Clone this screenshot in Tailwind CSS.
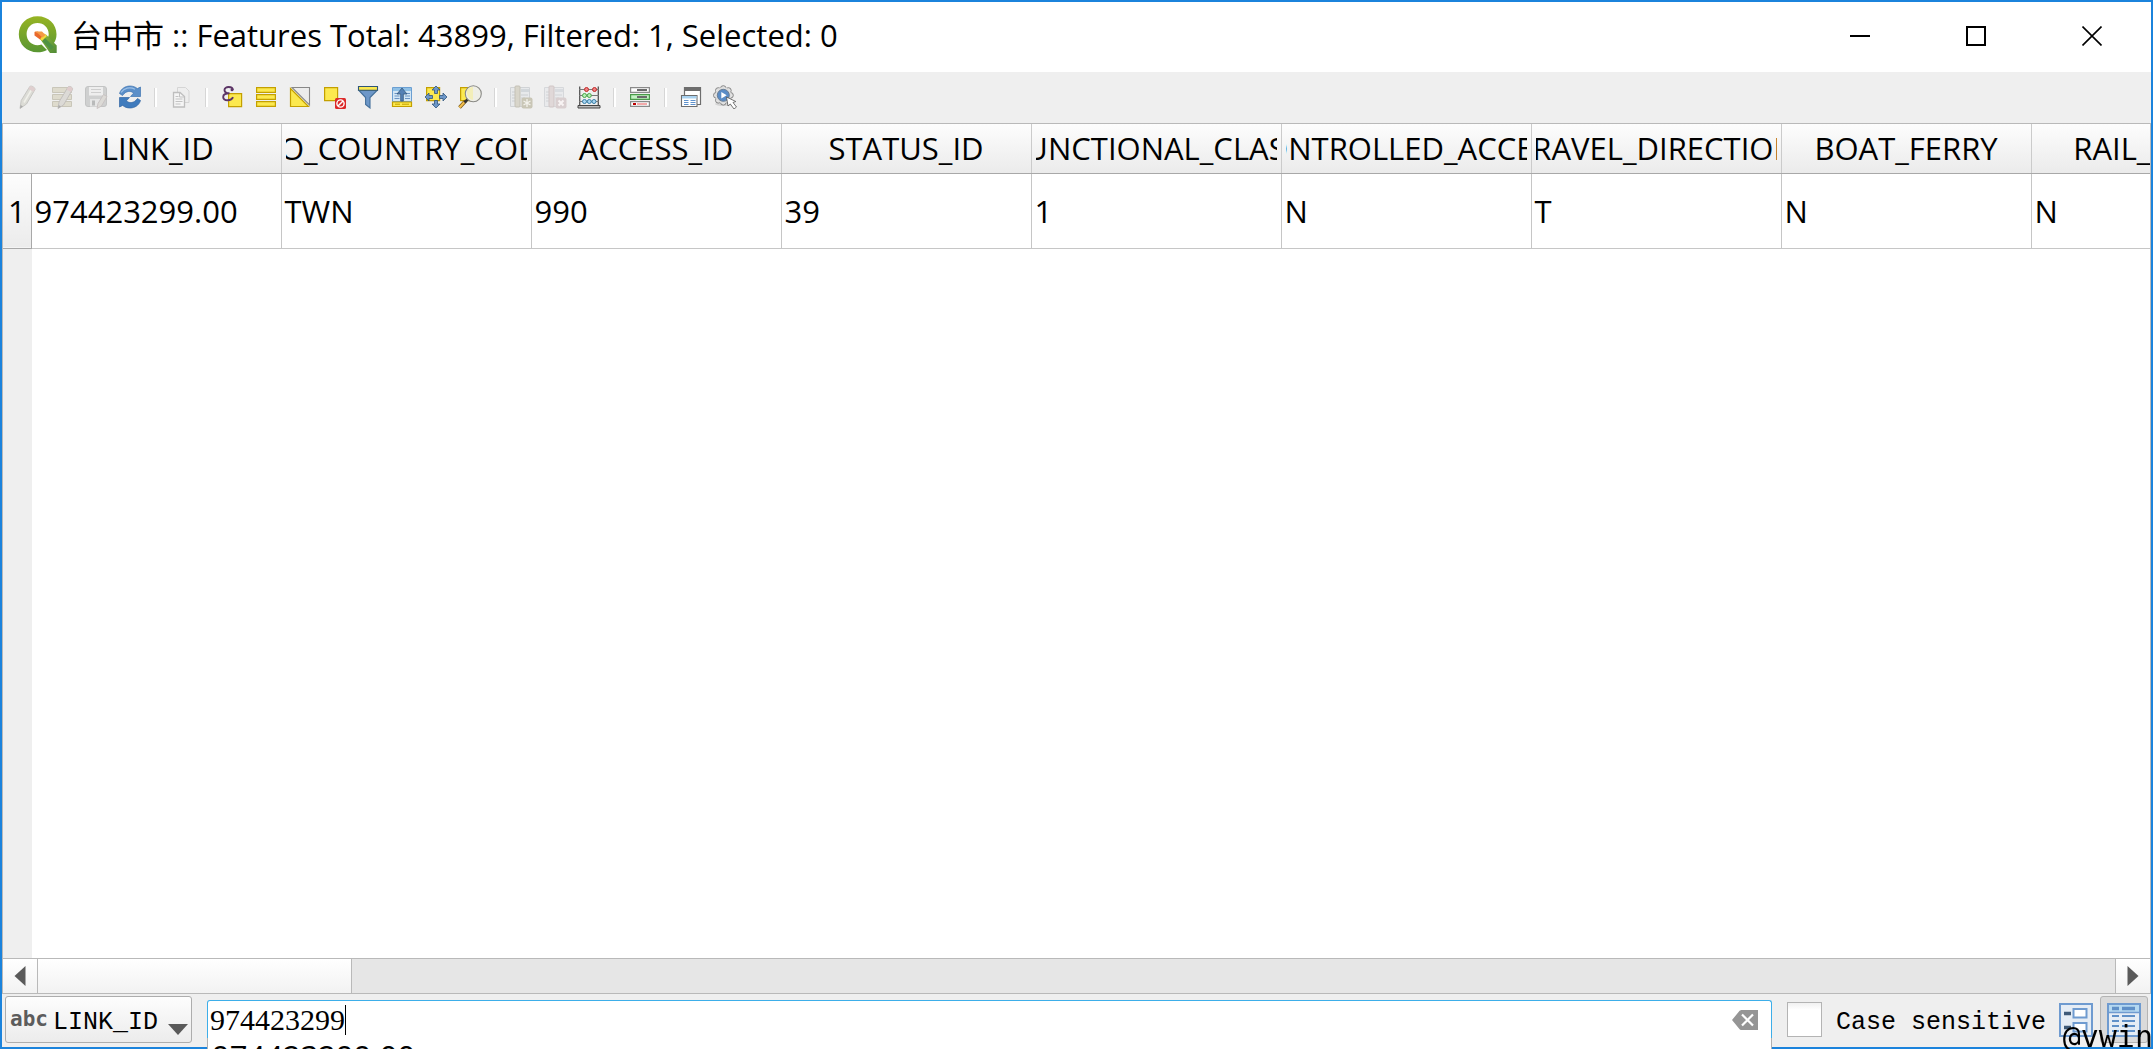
<!DOCTYPE html>
<html lang="en">
<head>
<meta charset="utf-8">
<title>台中市 :: Features Total: 43899, Filtered: 1, Selected: 0</title>
<script src="https://cdn.jsdelivr.net/npm/@tailwindcss/browser@4"></script>
</head>
<body class="overflow-hidden bg-white">
<div class="relative flex h-screen flex-col overflow-hidden border-2 border-[#1b83dc] bg-[#efefef] font-['Open_Sans','Noto_Sans_CJK_TC',sans-serif] text-black">

  <!-- Title bar -->
  <header class="flex h-[70px] shrink-0 items-center bg-white pl-4">
    <svg class="mb-1 size-10 shrink-0" viewBox="0 0 40 40">
      <defs>
        <linearGradient id="ring" x1="0" y1="0" x2="0" y2="1"><stop offset="0" stop-color="#97b423"/><stop offset="1" stop-color="#589632"/></linearGradient>
        <linearGradient id="tail" x1="0" y1="0" x2="1" y2="1"><stop offset="0" stop-color="#8fb83c"/><stop offset="1" stop-color="#4f8a36"/></linearGradient>
      </defs>
      <path d="M19.500 1.200C30.500 1.200 38.500 9 38.500 19.300C38.500 23 37.500 26 35.500 28.800L29.500 23C30.300 21.800 30.700 20.600 30.700 19C30.700 12.800 25.800 8 19.500 8C13.300 8 8.600 12.800 8.600 19C8.600 25.400 13.300 30.200 19.500 30.200C21 30.200 22.300 30 23.500 29.500L29 35C26.300 36.600 23 37.300 19.500 37.300C8.700 37.300 .800 29.500 .800 19.300C.800 9 8.700 1.200 19.500 1.200Z" fill="url(#ring)"/>
      <path d="M22.500 24.500V19.500H28L38.700 30.500V38H32Z" fill="url(#tail)"/>
      <path d="M22.500 24.500L33 35L36 32L25.500 21.500Z" fill="#4f9142"/>
      <path d="M21.500 23.500L26.500 18.500L29 21L24 26Z" fill="#f3d93b"/>
      <path d="M16.500 17V20.500L22 24.500L24 21.500L20 16.500Z" fill="#e9692c"/>
      <path d="M16.500 16.500H24L27.500 20L24.500 22.500L20 18.500Z" fill="#f59a45"/>
    </svg>
    <h1 class="ml-[13px] flex-1 truncate pb-1 text-[31px] leading-10">台中市 :: Features Total: 43899, Filtered: 1, Selected: 0</h1>
    <div class="mr-px flex self-stretch">
      <button type="button" aria-label="Minimize" class="flex w-[116px] items-center justify-center"><svg class="size-5" viewBox="0 0 20 20"><path d="M0 9H20" stroke="#000" stroke-width="2"/></svg></button>
      <button type="button" aria-label="Maximize" class="flex w-[116px] items-center justify-center pb-0.5"><svg class="size-5" viewBox="0 0 20 20"><path d="M1 1H19V19H1Z" fill="none" stroke="#000" stroke-width="2"/></svg></button>
      <button type="button" aria-label="Close" class="flex w-[116px] items-center justify-center pb-0.5"><svg class="size-5" viewBox="0 0 20 20"><path d="M.5 .5L19.500 19.500M19.500 .5L.5 19.500" stroke="#000" stroke-width="1.600"/></svg></button>
    </div>
  </header>

  <!-- Tool bar -->
  <div role="toolbar" class="flex h-[51px] shrink-0 items-center pb-px pl-[9px] [&>button]:flex [&>button]:w-[34px] [&>button]:justify-center [&_svg]:size-6">
    <button type="button" aria-label="Toggle editing" disabled>
      <svg viewBox="0 0 24 24"><path d="M4 23.500L5.200 15.500L13.800 1.500C15.500 .3 19 2.200 19 4.500L10.500 19Z" fill="#dcdcd6" stroke="#c6c6c2"/><path d="M13.800 1.500C15.500 .3 19 2.200 19 4.500L17.500 7L12.300 4Z" fill="#dfcfcf"/><path d="M8 17.500L15 5.500" stroke="#f0f0ea" stroke-width="1.500"/><path d="M4 23.500L4.600 20L7 21.500Z" fill="#aaa"/></svg></button>
    <button type="button" aria-label="Multi edit" disabled>
      <svg viewBox="0 0 24 24"><g fill="#dedbcd" stroke="#c9c6b9"><path d="M2.500 2.500h19v5h-19zM2.500 9.500h19v5h-19zM2.500 16.500h19v5h-19z"/></g><path d="M8 23.500L9 17L18 2C20 .5 23 2.500 22.500 4.500L13.500 20Z" fill="#dcdad6" stroke="#c2bfbc"/><path d="M18 2C20 .5 23 2.500 22.500 4.500L21 7L16.500 4.500Z" fill="#dfcccc"/><path d="M8 23.500L8.700 20L11 21.500Z" fill="#aaa"/></svg></button>
    <button type="button" aria-label="Save edits" disabled>
      <svg viewBox="0 0 24 24"><rect x="1.500" y="1.500" width="21" height="20" rx="2.500" fill="#cfd0d0" stroke="#c3c4c4"/><path d="M5 2h14v8.500H5z" fill="#eee"/><path d="M7 4.500h10M7 7.500h10" stroke="#cecece" stroke-width="1.200"/><path d="M6 14h11v7.500H6z" fill="#e6e6e6"/><path d="M8 15.500h3v5H8z" fill="#b9baba"/><path d="M13 23.500L14 18.500L19.500 9.500L23 11.500L17.500 21Z" fill="#dcdad6" stroke="#c9c3c3"/></svg></button>
    <button type="button" aria-label="Reload table">
      <svg viewBox="0 0 24 24"><path d="M1.500 8.500C3 3.500 7.500 1 12 1C15 1 17.500 2 19.300 3.600L22.500 2V11.500H12.500L15.500 8.200C13 5.500 8 5.500 4.500 10.500Z" fill="#5b8fc9" stroke="#3f74b0" stroke-width=".7"/><path d="M22.500 15.500C21 20.500 16.500 23 12 23C9 23 6.500 22 4.700 20.400L1.500 22V12.500H11.500L8.500 15.800C11 18.500 16 18.500 19.500 13.500Z" fill="#3f7bbd" stroke="#3367a3" stroke-width=".7"/><path d="M3 7.500C6 3 12 1.500 17 4.200" stroke="#9dc0e6" stroke-width="1.300" fill="none"/></svg></button>
    <span class="mx-[7px] h-[19px] w-[3px] border-x border-l-[#d6d6d6] border-r-white bg-white"></span>
    <button type="button" aria-label="Copy" disabled>
      <svg viewBox="0 0 24 24"><path d="M8.500 2.500h8l3.500 3.500v11.500H8.500z" fill="#eee" stroke="#d5d5d5"/><path d="M4.500 7.500h6.500l4.500 4v10.500h-11z" fill="#f5f5f5" stroke="#bebebe" stroke-width="1.300"/><path d="M10.500 7.500v4.500h5M6.500 11.500h3M6.500 14h7M6.500 16.500h7M6.500 19h5" fill="none" stroke="#c3c3c3"/></svg></button>
    <span class="mx-[7px] h-[19px] w-[3px] border-x border-l-[#d6d6d6] border-r-white bg-white"></span>
    <button type="button" aria-label="Select by expression">
      <svg viewBox="0 0 24 24"><path d="M8.600 8.600h13v13h-13z" fill="#fce94f" stroke="#c4a000" stroke-width="1.200"/><path d="M12.800 5C12.800 1.200 4.500 .8 4.500 5C4.500 7.200 6.500 8.300 9.500 8.300C5.500 8.300 3.200 9.600 3.200 12C3.200 16.300 11.500 16.300 13 12.200" fill="none" stroke="#5c3566" stroke-width="1.900"/><circle cx="12" cy="4.800" r="1.500" fill="#5c3566"/></svg></button>
    <button type="button" aria-label="Select all">
      <svg viewBox="0 0 24 24"><path d="M2.600 2.600h18.800v4.800H2.600zM2.600 9.600h18.800v4.800H2.600zM2.600 16.600h18.800v4.800H2.600z" fill="#fce94f" stroke="#c4a000" stroke-width="1.200"/></svg></button>
    <button type="button" aria-label="Invert selection">
      <svg viewBox="0 0 24 24"><path d="M4 2.500H21.500V20Z" fill="#ececec" stroke="#888" stroke-width="1.100"/><path d="M2.500 3.500V21.500H20.500Z" fill="#fce94f" stroke="#c4a000" stroke-width="1.200"/></svg></button>
    <button type="button" aria-label="Deselect all">
      <svg viewBox="0 0 24 24"><path d="M2.600 2.600h13v13h-13z" fill="#fce94f" stroke="#c4a000" stroke-width="1.200"/><rect x="13" y="13" width="11" height="11" rx="1.500" fill="#dc2a2a"/><circle cx="18.500" cy="18.500" r="3.600" fill="none" stroke="#fff" stroke-width="1.400"/><path d="M16 21L21 16" stroke="#fff" stroke-width="1.400"/></svg></button>
    <button type="button" aria-label="Filter">
      <svg viewBox="0 0 24 24"><path d="M3 5.500L9.600 12.500V19.500L14 23V12.500L21 5.500Z" fill="#6d97c8" stroke="#44709b" stroke-width="1.100"/><path d="M2.500 1.500h19v3.800h-19z" fill="#fce94f" stroke="#2f5577" stroke-width="1.100"/></svg></button>
    <button type="button" aria-label="Move selection to top">
      <svg viewBox="0 0 24 24"><path d="M2.500 2.500h19v14h-19z" fill="#d3e6f5" stroke="#6b9fd2"/><path d="M3 3h18v3H3z" fill="#8fc0e6"/><path d="M4.500 8.500h6M14 8.500h6M4.500 11h5M15 11h5M4.500 13.500h5M15 13.500h5" stroke="#6b94c4"/><path d="M2.500 17h19v4.500h-19z" fill="#fce94f" stroke="#c4a000" stroke-width="1.200"/><path d="M5 19.200h5M12 19.200h7" stroke="#c4a000"/><path d="M12 3L17 9H13.300V16H10.700V9H7Z" fill="#5581b5" stroke="#35597f" stroke-width=".8"/></svg></button>
    <button type="button" aria-label="Pan map to selection">
      <svg viewBox="0 0 24 24"><path d="M2.600 2.600h13v13h-13z" fill="#fce94f" stroke="#c4a000" stroke-width="1.200"/><g fill="#6d97c8" stroke="#31567c" stroke-width=".8"><path d="M12 1L16 5H13.500V8.500H10.500V5H8Z"/><path d="M12 23L16 19H13.500V15.500H10.500V19H8Z"/><path d="M1 12L5 8V10.500H8.500V13.500H5V16Z"/><path d="M23 12L19 8V10.500H15.500V13.500H19V16Z"/></g></svg></button>
    <button type="button" aria-label="Zoom map to selection">
      <svg viewBox="0 0 24 24"><path d="M2.600 2.600h11v13h-11z" fill="#fce94f" stroke="#c4a000" stroke-width="1.200"/><path d="M1.500 22.500L7.500 16" stroke="#7c5c14" stroke-width="3.600"/><path d="M1.500 22.500L6.500 17" stroke="#f4bf4e" stroke-width="2"/><path d="M6.500 17.500L10 14" stroke="#333" stroke-width="2.600"/><circle cx="15.300" cy="8.700" r="8" fill="#eeeee6" stroke="#8a8a86" stroke-width="1.100"/><path d="M9 5C11 2 14 2 15 2V15C12 15 8 11 9 5Z" fill="#f3eeb8"/></svg></button>
    <span class="mx-[7px] h-[19px] w-[3px] border-x border-l-[#d6d6d6] border-r-white bg-white"></span>
    <button type="button" aria-label="New field" disabled>
      <svg viewBox="0 0 24 24"><path d="M1.500 2.500h19v19h-19z" fill="#e7e9eb" stroke="#d0d3d6"/><path d="M12 4h8v3h-8z" fill="#d2d7db"/><path d="M3 7h3M3 10h3M3 13h3M3 16h3M12 10h7M12 13h4" stroke="#cbced1"/><rect x="6" y="1" width="5" height="21" rx="1" fill="#d8d5ca" stroke="#c4c1b6"/><rect x="12.500" y="12.500" width="11" height="11" rx="2" fill="#c9c6b6"/><path d="M18 14v8M14.500 16l7 4M21.500 16l-7 4" stroke="#f3f2ec" stroke-width="1.300"/></svg></button>
    <button type="button" aria-label="Delete field" disabled>
      <svg viewBox="0 0 24 24"><path d="M1.500 2.500h19v19h-19z" fill="#e9eaec" stroke="#d6d8db"/><path d="M12 4h8v3h-8z" fill="#d9dce0"/><path d="M3 7h3M3 10h3M3 13h3M3 16h3M12 10h7M12 13h4" stroke="#d2d4d7"/><rect x="6" y="1" width="5" height="21" rx="1" fill="#e0d8d8" stroke="#d0c6c6"/><rect x="12.500" y="12.500" width="11" height="11" rx="2" fill="#d9cfd0"/><path d="M15.500 15.500l5 5M20.500 15.500l-5 5" stroke="#f8f4f4" stroke-width="2"/></svg></button>
    <button type="button" aria-label="Field calculator">
      <svg viewBox="0 0 24 24"><path d="M2.700 1.500V21M21.300 1.500V21" stroke="#555" stroke-width="1.300"/><path d="M2 4.500h20M2 10.500h20M2 16.500h20" stroke="#777"/><path d="M1 20.500h22v2.500H1z" fill="#bbb" stroke="#444"/><g stroke-width="1"><g fill="#f08080" stroke="#c02a2a"><circle cx="9.500" cy="4.500" r="2"/><circle cx="17.500" cy="4.500" r="2"/></g><g fill="#b5efb5" stroke="#49a549"><circle cx="7.500" cy="10.500" r="2"/><circle cx="12.300" cy="10.500" r="2"/></g><g fill="#a9d5f2" stroke="#3a80a8"><circle cx="7.500" cy="16.500" r="2"/><circle cx="12.300" cy="16.500" r="2"/><circle cx="17" cy="16.500" r="2"/></g></g></svg></button>
    <span class="mx-[7px] h-[19px] w-[3px] border-x border-l-[#d6d6d6] border-r-white bg-white"></span>
    <button type="button" aria-label="Conditional formatting">
      <svg viewBox="0 0 24 24"><path d="M2.600 2.600h18.800v4.800H2.600z" fill="#fff" stroke="#8a8a8a" stroke-width="1.200"/><path d="M2.600 9.600h18.800v4.800H2.600z" fill="#c4f3c4" stroke="#4a9a4a" stroke-width="1.200"/><path d="M2.600 16.600h18.800v4.800H2.600z" fill="#fff" stroke="#8a8a8a" stroke-width="1.200"/><path d="M9 5h10M9 12h10" stroke="#6b6b6b" stroke-width="2"/><path d="M5 19h3" stroke="#b00" stroke-width="2"/><path d="M9 19h10" stroke="#f4aaaa" stroke-width="2"/></svg></button>
    <span class="mx-[7px] h-[19px] w-[3px] border-x border-l-[#d6d6d6] border-r-white bg-white"></span>
    <button type="button" aria-label="Dock attribute table">
      <svg viewBox="0 0 24 24"><path d="M5.500 2.500h16v17h-16z" fill="#fff" stroke="#6d6d6d" stroke-width="1.200"/><path d="M5 2h17v4H5z" fill="#6d6d6d"/><path d="M2.500 10.500h15.500v11H2.500z" fill="#fff" stroke="#6d6d6d" stroke-width="1.100"/><path d="M3 11h14.500v2.500H3z" fill="#a8d2f0"/><path d="M5 15.500h4.500M11.500 15.500h5M5 17.500h4.500M11.500 17.500h5M5 19.500h4.500M11.500 19.500h5" stroke="#5f92cc"/></svg></button>
    <button type="button" aria-label="Actions">
      <svg viewBox="0 0 24 24"><ellipse cx="11" cy="19" rx="9" ry="2" fill="#d5d5d5"/><g fill="#e4e4e4" stroke="#858585"><circle cx="10.300" cy="3.500" r="2.800"/><circle cx="15.400" cy="5.500" r="2.800"/><circle cx="17.500" cy="10.300" r="2.800"/><circle cx="15.400" cy="15.300" r="2.800"/><circle cx="10.300" cy="17.300" r="2.800"/><circle cx="5.300" cy="15.300" r="2.800"/><circle cx="3.300" cy="10.300" r="2.800"/><circle cx="5.300" cy="5.500" r="2.800"/></g><circle cx="10.300" cy="10.300" r="8" fill="#dedede"/><circle cx="10.300" cy="10.300" r="6" fill="#5a8cc6" stroke="#6b7f95"/><path d="M8.300 7L13.700 10.300L8.300 13.600Z" fill="#fff"/><path d="M13.500 12L15 21L17.300 19L21 24L23.500 22L20 17.500L22.800 16.500Z" fill="#fff" stroke="#555" stroke-width=".8"/></svg></button>
  </div>

  <!-- Attribute table -->
  <main class="min-h-0 flex-1 overflow-hidden border-x border-t border-[#b9b9b9] bg-[linear-gradient(to_right,#efefef_29px,#fff_29px)]">
    <table class="w-[2278px] table-fixed border-collapse text-left text-[31px] leading-10">
      <colgroup><col class="w-[28px]"><col class="w-[250px]"><col class="w-[250px]"><col class="w-[250px]"><col class="w-[250px]"><col class="w-[250px]"><col class="w-[250px]"><col class="w-[250px]"><col class="w-[250px]"><col class="w-[250px]"></colgroup>
      <thead class="bg-linear-to-b from-[#fdfdfd] to-[#ebebeb] [&_div]:mx-1 [&_div]:flex [&_div]:justify-center [&_div]:overflow-hidden [&_th]:border-b [&_th]:border-b-[#a8a8a8] [&_th]:p-0 [&_th]:font-normal">
        <tr class="h-[49px]">
          <th colspan="2" class="border-r border-r-[#cbcbcb]"><div class="pl-8">LINK_ID</div></th>
          <th class="border-r border-r-[#cbcbcb]"><div>ISO_COUNTRY_CODE</div></th>
          <th class="border-r border-r-[#cbcbcb]"><div>ACCESS_ID</div></th>
          <th class="border-r border-r-[#cbcbcb]"><div>STATUS_ID</div></th>
          <th class="border-r border-r-[#cbcbcb]"><div>FUNCTIONAL_CLASS</div></th>
          <th class="border-r border-r-[#cbcbcb]"><div>CONTROLLED_ACCESS</div></th>
          <th class="border-r border-r-[#cbcbcb]"><div>TRAVEL_DIRECTION</div></th>
          <th class="border-r border-r-[#cbcbcb]"><div>BOAT_FERRY</div></th>
          <th><div>RAIL_FERRY</div></th>
        </tr>
      </thead>
      <tbody class="[&_td]:border-r [&_td]:border-b [&_td]:border-[#c6c6c6] [&_td]:py-0 [&_td]:pr-0 [&_td]:pl-[3px]">
        <tr class="h-[75px]">
          <th scope="row" class="border-r border-b border-[#a8a8a8] bg-linear-to-b from-[#fdfdfd] to-[#ebebeb] p-0 text-center font-normal">1</th>
          <td class="bg-white">974423299.00</td><td>TWN</td><td>990</td><td>39</td><td>1</td><td>N</td><td>T</td><td>N</td><td>N</td>
        </tr>
      </tbody>
    </table>
  </main>

  <!-- Horizontal scroll bar -->
  <div class="flex h-9 shrink-0 border border-[#b9b9b9] bg-[#e6e6e6]">
    <button type="button" aria-label="Scroll left" class="flex w-[35px] items-center justify-center border-r border-[#b9b9b9] bg-linear-to-b from-white to-[#f2f2f2]"><svg class="h-5 w-3" viewBox="0 0 12 20"><path d="M11.500 0V20L.5 10Z" fill="#5a5a5a"/></svg></button>
    <div class="w-[314px] border-r border-[#b9b9b9] bg-linear-to-b from-white to-[#f2f2f2]"></div>
    <button type="button" aria-label="Scroll right" class="ml-auto flex w-[35px] items-center justify-center border-l border-[#b9b9b9] bg-linear-to-b from-white to-[#f2f2f2]"><svg class="h-5 w-3" viewBox="0 0 12 20"><path d="M.5 0V20L11.500 10Z" fill="#5a5a5a"/></svg></button>
  </div>

  <!-- Filter bar -->
  <footer class="flex h-[53px] shrink-0 items-center px-[3px] pb-0.5">
    <div class="relative h-[47px] w-[187px] shrink-0">
      <select aria-label="Filter field" class="size-full appearance-none rounded-[3px] border border-[#adadad] bg-linear-to-b from-[#fdfdfd] to-[#ececec] pt-1.5 pl-[47px] font-['Liberation_Mono',monospace] text-[25px] leading-9"><option>LINK_ID</option></select>
      <span class="pointer-events-none absolute top-2 left-[5px] font-['DejaVu_Sans_Mono',monospace] text-[21px] leading-[30px] font-bold text-[#5c5c5c]">abc</span>
      <svg class="pointer-events-none absolute right-1 bottom-2 h-[11px] w-5" viewBox="0 0 20 11"><path d="M0 0H20L10 11Z" fill="#5a5a5a"/></svg>
    </div>
    <div class="relative mx-[15px] h-[39px] flex-1">
      <input type="text" aria-label="Filter value" value="974423299" class="size-full rounded-t-[3px] border border-[#3daee9] border-b-[#b0b0b0] bg-white pl-[2px] font-['Liberation_Serif',serif] text-[30px] leading-9 outline-none">
      <span class="pointer-events-none absolute top-[5px] left-[138px] h-[30px] w-px bg-black"></span>
      <button type="button" aria-label="Clear" class="absolute top-[10px] right-[14px]"><svg class="h-5 w-[26px]" viewBox="0 0 26 20"><path d="M0 10L7 1.500C7.800 .5 8.500 0 10 0H26V20H10C8.500 20 7.800 19.500 7 18.500Z" fill="#959595"/><path d="M10 4.500L21 15.500M21 4.500L10 15.500" stroke="#fff" stroke-width="2.200"/></svg></button>
      <!-- Completion list -->
      <div class="absolute top-[39px] left-0 h-[60px] w-full border-x border-[#b0b0b0] bg-white pl-1 text-[31px] leading-9">974423299.00</div>
    </div>
    <label class="flex items-center gap-[14px] font-['Liberation_Mono',monospace] text-[25px] leading-9">
      <input type="checkbox" class="size-[35px] appearance-none border border-[#b4b4b4] bg-linear-to-b from-[#f1f1f1] to-white to-20%"><span class="pt-1.5">Case sensitive</span>
    </label>
    <button type="button" aria-label="Form view" class="mr-[7px] ml-[13px]"><svg class="size-[34px]" viewBox="0 0 34 34"><path d="M1 1h32v32H1z" fill="#e6edf5" stroke="#6f9bd0" stroke-width="2"/><path d="M5 10.500h7M5 24.500h7" stroke="#3f5a78" stroke-width="3.500"/><path d="M14.500 6h13v8.500h-13zM14.500 20h13v8.500h-13z" fill="#fff" stroke="#6f9bd0" stroke-width="2"/></svg></button>
    <button type="button" aria-label="Table view" class="flex h-[47px] w-[48px] items-center justify-center rounded-[3px] border border-[#b4b4b4] bg-[#dadada]"><svg class="size-[34px]" viewBox="0 0 34 34"><path d="M1 1h32v32H1z" fill="#e6edf5" stroke="#6f9bd0" stroke-width="2"/><path d="M2 2h30v7H2z" fill="#b4d8f1"/><path d="M1 9.500h32" stroke="#6f9bd0" stroke-width="1.500"/><path d="M5 5.500h7M15 5.500h13" stroke="#5f90c8" stroke-width="3.500"/><path d="M5 13h7M15 13h13M5 18h7M15 18h13M5 23h7M15 23h13M5 28h7M15 28h13" stroke="#5f90c8" stroke-width="2"/></svg></button>
  </footer>

  <!-- The completion list runs over the window's bottom edge -->
  <div class="pointer-events-none fixed bottom-0 left-[207px] h-[11px] w-[calc(100%-588px)] overflow-hidden border-x border-[#b0b0b0] bg-white pl-1 text-[31px] leading-9">974423299.00</div>
</div>

<!-- Watermark over the window corner -->
<div class="pointer-events-none fixed right-0 -bottom-[6px] font-['DejaVu_Sans_Mono',monospace] text-[30px] leading-9">@vwin</div>
</body>
</html>
